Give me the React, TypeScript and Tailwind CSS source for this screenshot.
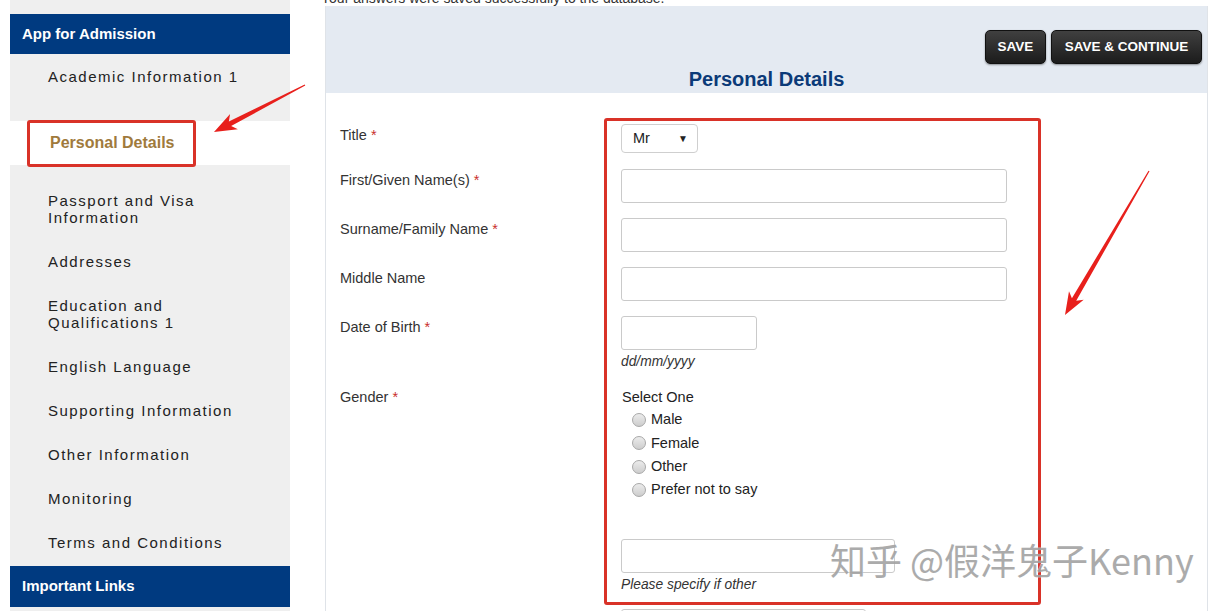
function arrowPoints(x1: number, y1: number, x2: number, y2: number) {
  const dx = x2 - x1;
  const dy = y2 - y1;
  const len = Math.sqrt(dx * dx + dy * dy);
  const ux = dx / len;
  const uy = dy / len;
  const nx = -uy;
  const ny = ux;
  const headLen = 18;
  const headW = 17;
  const shaftW = 5;
  const tailW = 1.2;
  const bx = x2 - ux * headLen;
  const by = y2 - uy * headLen;
  const wx = x2 - ux * headLen * 1.25;
  const wy = y2 - uy * headLen * 1.25;
  const pts = [
    [x1 + (nx * tailW) / 2, y1 + (ny * tailW) / 2],
    [bx + (nx * shaftW) / 2, by + (ny * shaftW) / 2],
    [wx + (nx * headW) / 2, wy + (ny * headW) / 2],
    [x2, y2],
    [wx - (nx * headW) / 2, wy - (ny * headW) / 2],
    [bx - (nx * shaftW) / 2, by - (ny * shaftW) / 2],
    [x1 - (nx * tailW) / 2, y1 - (ny * tailW) / 2],
  ];
  return pts.map((p) => p.join(",")).join(" ");
}

function NavItem({ label }: { label: string }) {
  return (
    <div className="pl-[38px] py-[13.5px]">
      <div className="w-[205px] text-[15px] leading-[17px] tracking-[1.5px] text-[#222]">{label}</div>
    </div>
  );
}

function Label({ text, required }: { text: string; required?: boolean }) {
  return (
    <div className="w-[295px] shrink-0 pl-[14px] pt-[2px] text-[14.5px] leading-[18px] text-[#333]">
      {text}
      {required && <span className="text-[#c9302c]"> *</span>}
    </div>
  );
}

function Radio({ label }: { label: string }) {
  return (
    <div className="flex items-center h-[23.3px] pl-[11px] gap-[5px]">
      <span className="w-[14px] h-[14px] rounded-full border border-[#a8a8a8] bg-linear-to-b from-[#ececec] to-[#cdcdcd]" />
      <span className="text-[14.5px] text-[#222]">{label}</span>
    </div>
  );
}

export default function App() {
  return (
    <div className="relative w-[1225px] h-[611px] overflow-hidden bg-white font-['Liberation_Sans',Arial,sans-serif]">
      <div className="flex">
        {/* Sidebar */}
        <div className="ml-[10px] w-[280px] shrink-0 bg-[#efefef] pt-[14px]">
          <div className="h-[40px] bg-[#003a80] pl-[12px] flex items-center text-white font-bold text-[15px]">
            App for Admission
          </div>
          <NavItem label="Academic Information 1" />
          <div className="mt-[23px] mb-[13px] h-[44px] bg-white flex items-center pl-[40px] text-[16px] font-bold text-[#a07a3c]">
            Personal Details
          </div>
          <NavItem label="Passport and Visa Information" />
          <NavItem label="Addresses" />
          <NavItem label="Education and Qualifications 1" />
          <NavItem label="English Language" />
          <NavItem label="Supporting Information" />
          <NavItem label="Other Information" />
          <NavItem label="Monitoring" />
          <NavItem label="Terms and Conditions" />
          <div className="mt-[2px] h-[41px] bg-[#003a80] pl-[12px] flex items-center text-white font-bold text-[15px]">
            Important Links
          </div>
        </div>

        {/* Main */}
        <div className="ml-[35px] w-[883px] shrink-0">
          <div className="-mt-[10px] -ml-[4px] h-[16px] leading-[16px] text-[14px] text-[#333]">
            Your answers were saved successfully to the database.
          </div>
          <div className="border-x border-[#dfe3e8]">
            <div className="h-[87px] bg-[#e4eaf2] pt-[24px]">
              <div className="flex justify-end gap-[5px] pr-[5px]">
                <button className="h-[34px] w-[61px] rounded-[5px] border border-[#111] bg-linear-to-b from-[#404040] to-[#1c1c1c] text-white font-bold text-[13.5px] shadow-[0_1px_2px_rgba(0,0,0,0.4)]">
                  SAVE
                </button>
                <button className="h-[34px] w-[151px] rounded-[5px] border border-[#111] bg-linear-to-b from-[#404040] to-[#1c1c1c] text-white font-bold text-[13.5px] shadow-[0_1px_2px_rgba(0,0,0,0.4)]">
                  SAVE &amp; CONTINUE
                </button>
              </div>
              <div className="mt-[3px] text-center text-[20px] leading-[24px] font-bold text-[#0b3a78]">
                Personal Details
              </div>
            </div>

            <div className="bg-white pt-[31px] pb-[40px]">
              <div className="flex">
                <Label text="Title" required />
                <div className="w-[77px] h-[29px] border border-[#cfcfcf] rounded-[4px] flex items-center justify-between pl-[11px] pr-[9px] text-[14.5px] text-[#222]">
                  <span>Mr</span>
                  <span className="text-[10px]">▼</span>
                </div>
              </div>

              <div className="flex mt-[16px]">
                <Label text="First/Given Name(s)" required />
                <input className="w-[386px] h-[34px] border border-[#cacaca] rounded-[3px] outline-none" />
              </div>

              <div className="flex mt-[15px]">
                <Label text="Surname/Family Name" required />
                <input className="w-[386px] h-[34px] border border-[#cacaca] rounded-[3px] outline-none" />
              </div>

              <div className="flex mt-[15px]">
                <Label text="Middle Name" />
                <input className="w-[386px] h-[34px] border border-[#cacaca] rounded-[3px] outline-none" />
              </div>

              <div className="flex mt-[15px]">
                <Label text="Date of Birth" required />
                <div>
                  <input className="w-[136px] h-[34px] border border-[#cacaca] rounded-[3px] outline-none" />
                  <div className="mt-[4px] text-[13.8px] leading-[16px] italic text-[#333]">dd/mm/yyyy</div>
                </div>
              </div>

              <div className="flex mt-[18px]">
                <div className="w-[295px] shrink-0 pl-[14px] text-[14.5px] leading-[18px] text-[#333]">
                  Gender<span className="text-[#c9302c]"> *</span>
                </div>
                <div>
                  <div className="pl-[1px] text-[14.5px] leading-[18px] text-[#222]">Select One</div>
                  <div className="mt-[2.5px]">
                    <Radio label="Male" />
                    <Radio label="Female" />
                    <Radio label="Other" />
                    <Radio label="Prefer not to say" />
                  </div>
                  <input className="mt-[37px] w-[274px] h-[34px] border border-[#cacaca] rounded-[3px] outline-none" />
                  <div className="mt-[4px] text-[13.8px] leading-[16px] italic text-[#333]">Please specify if other</div>
                  <div className="mt-[16px] w-[245px] h-[34px] border border-[#cacaca] rounded-[3px]" />
                </div>
              </div>
            </div>
          </div>
        </div>
      </div>

      {/* Annotation overlays */}
      <div className="absolute left-[27px] top-[120px] w-[169px] h-[47px] border-[3px] border-[#d93228] rounded-[3px]" />
      <div className="absolute left-[604px] top-[118px] w-[437px] h-[487px] border-[3px] border-[#d93228] rounded-[3px]" />
      <svg className="absolute inset-0 pointer-events-none" width="1225" height="611">
        <polygon points={arrowPoints(305, 85, 214, 132)} fill="#e8201c" />
        <polygon points={arrowPoints(1149, 171, 1065, 315)} fill="#e8201c" />
      </svg>
      <div className="absolute left-[830px] top-[537px] text-[36px] leading-[44px] text-[#a3a3a3] font-['Noto_Sans_CJK_SC',sans-serif] [text-shadow:0_0_1px_#fff] opacity-90">
        知乎 @假洋鬼子Kenny
      </div>
    </div>
  );
}
